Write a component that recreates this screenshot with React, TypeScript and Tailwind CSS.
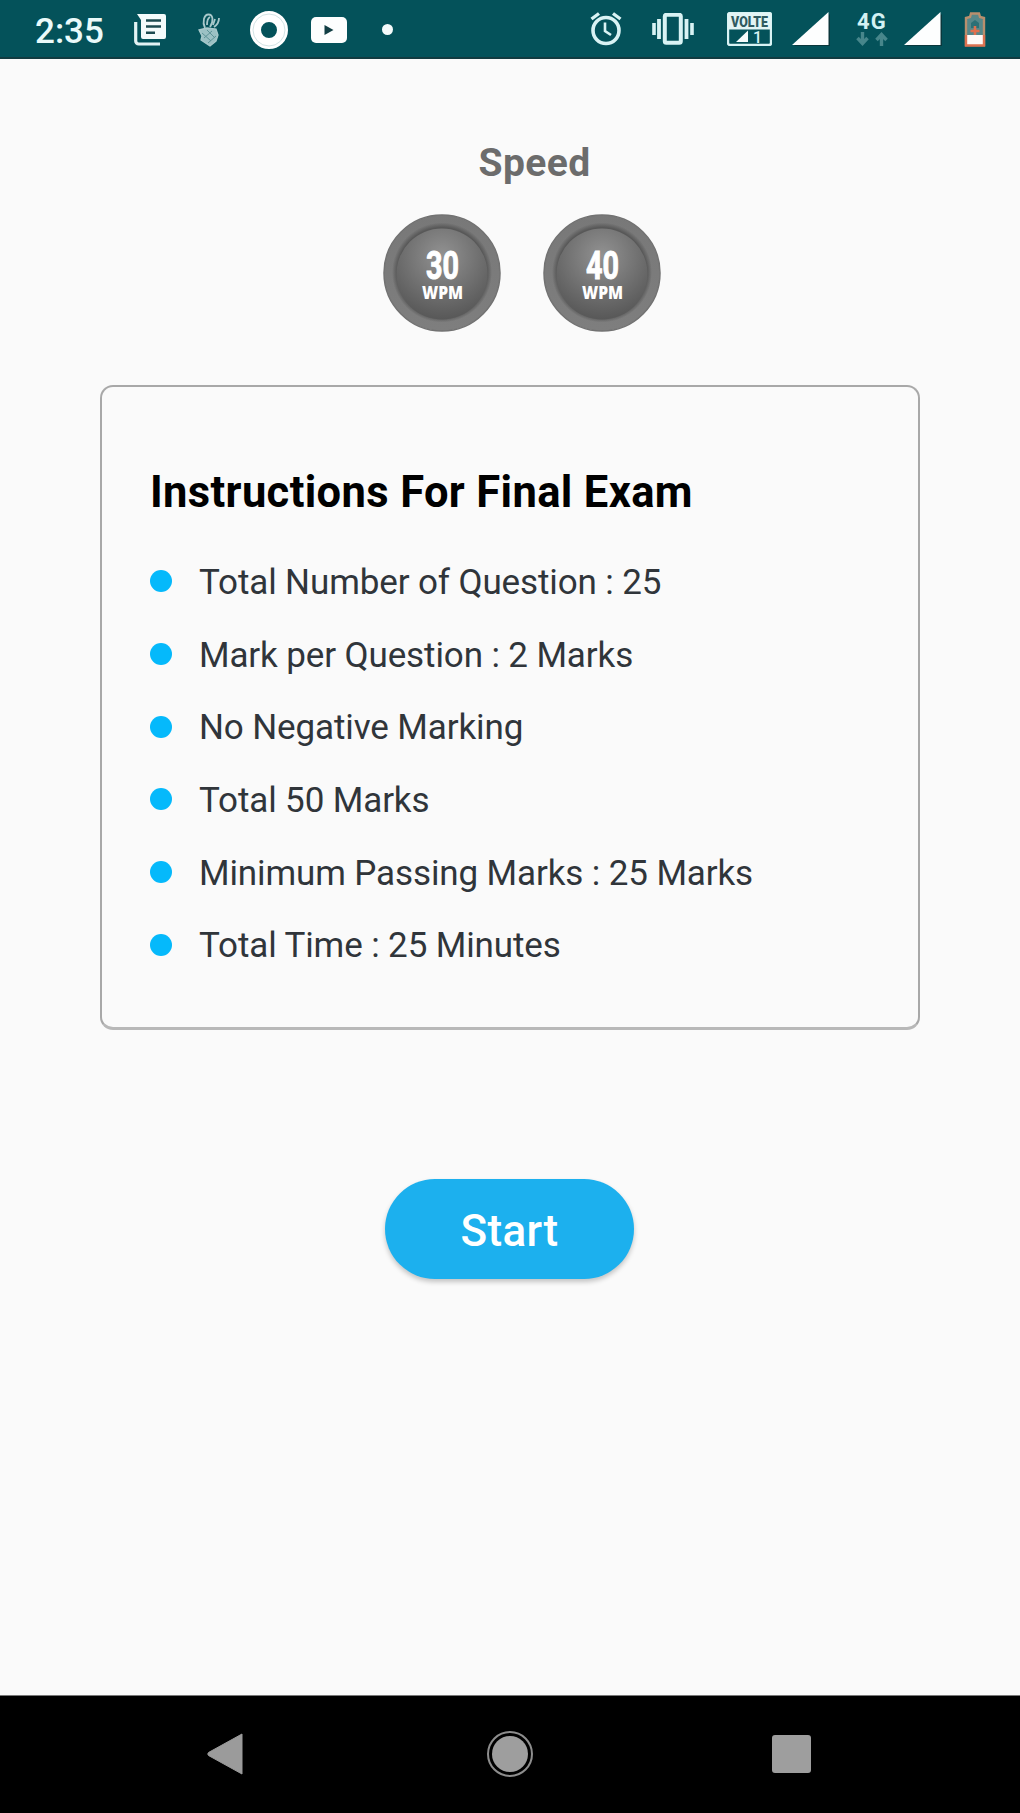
const instructions = [
  "Total Number of Question : 25",
  "Mark per Question : 2 Marks",
  "No Negative Marking",
  "Total 50 Marks",
  "Minimum Passing Marks : 25 Marks",
  "Total Time : 25 Minutes",
];

function NewsIcon() {
  return (
    <svg viewBox="0 0 32 32" className="mt-[2px] ml-[30px] h-8 w-8 shrink-0">
      <path d="M3 0h27a2 2 0 0 1 2 2v21a2 2 0 0 1-2 2H9a2 2 0 0 1-2-2V6z" fill="#f4fbfb" />
      <path d="M12 6.500h15M12 12.500h15M12 18.800h9" stroke="#1c4b50" strokeWidth="2.400" />
      <path d="M1.700 8v19a3 3 0 0 0 3 3H26" fill="none" stroke="#e3f3f4" strokeWidth="3.200" />
    </svg>
  );
}

function MascotIcon() {
  return (
    <svg viewBox="0 0 22 34" className="mt-[2px] ml-[32px] h-[34px] w-[22px] shrink-0" fill="none" stroke="#a9c9cb">
      <path d="M7 15C4 9 6 1.500 10.500 1.500S16 8 12 14M9 12c0-4 1-7 3-8" strokeWidth="1.800" />
      <path d="M21 5c0 4-2 7-5 9M17 6l-2 6" strokeWidth="1.800" />
      <path d="M1 17l8-2 9 1 2 6-2 6-6 5-9-6 1-4z" fill="#9cc1c4" strokeWidth="1.300" />
      <path d="M4 20l9 8M9 17l8 8M6 25l8-7M10 30l8-7" stroke="#5e9397" strokeWidth="1" />
    </svg>
  );
}

function AlarmIcon() {
  return (
    <svg viewBox="0 0 32 34" className="h-[34px] w-8 shrink-0" fill="none" stroke="#d9f3f4">
      <circle cx="16" cy="18.500" r="13" strokeWidth="3.600" />
      <path d="M1.500 7L9 1.500M30.500 7L23 1.500" strokeWidth="3.400" />
      <path d="M15 10.500v8.500l6 4" strokeWidth="2.600" />
    </svg>
  );
}

function VibrateIcon() {
  return (
    <svg viewBox="0 0 42 32" className="ml-[30px] h-8 w-[42px] shrink-0" fill="none" stroke="#d9f3f4">
      <rect x="12.800" y="1.800" width="16" height="28" rx="1.500" strokeWidth="4" />
      <path d="M7 6v20M34.500 6v20" strokeWidth="3.800" />
      <path d="M2 10v12M40 10v12" strokeWidth="3.600" />
    </svg>
  );
}

function VolteIcon() {
  return (
    <svg viewBox="0 0 45 34" className="ml-[33px] h-[34px] w-[45px] shrink-0">
      <rect x="1" y="1" width="43" height="32" rx="2" fill="#04525a" stroke="#d9f3f4" strokeWidth="2.400" />
      <path d="M1 1h43v16.500H1z" fill="#e2f4f5" />
      <text
        x="4"
        y="14.500"
        textLength="37"
        lengthAdjust="spacingAndGlyphs"
        fill="#2f5a60"
        fontFamily="Roboto, sans-serif"
        fontWeight="900"
        fontSize="14"
      >
        VOLTE
      </text>
      <path d="M21 18.500V30H9z" fill="#f4fbfb" />
      <text x="26" y="30.500" fill="#d9f3f4" fontFamily="Roboto, sans-serif" fontWeight="500" fontSize="16">
        1
      </text>
    </svg>
  );
}

function SignalIcon() {
  return (
    <svg viewBox="0 0 38 34" className="h-[34px] w-[38px] shrink-0">
      <path d="M38 2v32H2z" fill="#0a373c" />
      <path d="M36.500 0v33H0z" fill="#fdfefe" />
    </svg>
  );
}

function NetworkType() {
  return (
    <div className="ml-[26px] flex w-8 shrink-0 flex-col items-center">
      <span className="text-[22px] leading-[18px] font-bold tracking-[1.200px] text-[#d3f1f3]">4G</span>
      <svg viewBox="0 0 32 14" className="mt-px h-[14px] w-8" fill="none" stroke="#47868b" strokeWidth="3.400">
        <path d="M6.500 0v11M1.500 6l5 5.500 5-5.500M25.500 14V3M20.500 8l5-5.500 5 5.500" />
      </svg>
    </div>
  );
}

function BatteryIcon() {
  return (
    <svg viewBox="0 0 22 35" className="ml-[22px] h-[35px] w-[22px] shrink-0">
      <path d="M2 6l4-1 1-3.500h8L16 5l4 1v27H2z" fill="#57888a" stroke="#b98f6d" strokeWidth="2.400" />
      <path d="M7 11l4-3 4 3v5H7z" fill="#2c7076" />
      <path d="M2 23v10.500h18V23" fill="#fffaf7" stroke="#dd7250" strokeWidth="2.400" />
      <path d="M11 14v9M6.500 19h9" stroke="#e0704d" strokeWidth="2.600" />
    </svg>
  );
}

function StatusBar() {
  return (
    <header className="flex h-[59px] items-center border-b-2 border-[#123b40] bg-[#04525a]">
      <span className="ml-[35px] w-[69px] pt-[5px] text-[35px] leading-none font-medium whitespace-nowrap text-[#eafafa]">
        2:35
      </span>
      <NewsIcon />
      <MascotIcon />
      <svg viewBox="0 0 38 38" className="mt-[2px] ml-[30px] h-[38px] w-[38px] shrink-0">
        <circle cx="19" cy="19" r="13.500" fill="none" stroke="#fff" strokeWidth="11" />
        <circle cx="19" cy="19" r="16" fill="none" stroke="#d2e3e4" strokeWidth="1" />
      </svg>
      <svg viewBox="0 0 36 26" className="mt-[2px] ml-[23px] h-[26px] w-9 shrink-0">
        <rect width="36" height="26" rx="5" fill="#fdfefe" />
        <path d="M13.500 8l9 5-9 5z" fill="#123f44" />
      </svg>
      <span className="mt-[2px] ml-[35px] h-[11px] w-[11px] rounded-full bg-[#f4fbfb]" />

      <div className="mt-px ml-auto flex items-center pr-[34px]">
        <AlarmIcon />
        <VibrateIcon />
        <VolteIcon />
        <span className="ml-5 flex">
          <SignalIcon />
        </span>
        <NetworkType />
        <span className="ml-4 flex">
          <SignalIcon />
        </span>
        <BatteryIcon />
      </div>
    </header>
  );
}

function SpeedButton({ value }: { value: string }) {
  return (
    <button className="h-[118px] w-[118px] rounded-full">
      <svg viewBox="0 0 118 118" className="h-full w-full">
        <defs>
          <radialGradient id={`face-${value}`} cx="50%" cy="30%" r="72%">
            <stop offset="0" stopColor="#929292" />
            <stop offset="0.500" stopColor="#747474" />
            <stop offset="1" stopColor="#565656" />
          </radialGradient>
          <linearGradient id={`rim-${value}`} x1="0" y1="0" x2="0" y2="1">
            <stop offset="0" stopColor="#787878" />
            <stop offset="1" stopColor="#7e7e7e" />
          </linearGradient>
          <radialGradient id={`edge-${value}`}>
            <stop offset="0.900" stopColor="#585858" />
            <stop offset="1" stopColor="#585858" stopOpacity="0" />
          </radialGradient>
        </defs>
        <circle cx="59" cy="59" r="58" fill={`url(#rim-${value})`} stroke="#727272" strokeWidth="1.500" />
        <circle cx="59" cy="58.500" r="50" fill={`url(#edge-${value})`} />
        <circle cx="59" cy="60" r="45.500" fill={`url(#face-${value})`} />
        <g fill="#fff" fontFamily="Roboto, sans-serif">
          <text
            x="43"
            y="65"
            textLength="33"
            lengthAdjust="spacingAndGlyphs"
            fontWeight="700"
            fontSize="39"
            stroke="#fff"
            strokeWidth="1"
          >
            {value}
          </text>
          <text
            x="39"
            y="85"
            textLength="41"
            lengthAdjust="spacingAndGlyphs"
            fontFamily="Open Sans, sans-serif"
            fontWeight="800"
            fontSize="17"
          >
            WPM
          </text>
        </g>
      </svg>
    </button>
  );
}

function NavigationBar() {
  return (
    <nav className="flex h-[118px] items-center border-t border-[#777] bg-black pb-[2px]">
      <svg viewBox="0 0 37 42" className="ml-[207px] h-[42px] w-[37px]">
        <path d="M35 1v40L1.500 22.500q-1.500-1.500 0-3z" fill="#9b9b9b" stroke="#9b9b9b" />
      </svg>
      <svg viewBox="0 0 48 48" className="ml-[242px] h-12 w-12">
        <circle cx="24" cy="24" r="22" fill="none" stroke="#8d8d8d" strokeWidth="2" />
        <circle cx="24" cy="24" r="18" fill="#9e9e9e" />
      </svg>
      <span className="ml-[238px] h-[38px] w-[39px] rounded-[3px] bg-[#9e9e9e]" />
    </nav>
  );
}

export default function App() {
  return (
    <div className="flex h-[1813px] w-[1020px] flex-col overflow-hidden bg-[#fafafa] font-[Roboto,sans-serif]">
      <StatusBar />

      <main className="flex flex-1 flex-col items-center">
        {/* Speed selector */}
        <h2 className="mt-[82px] ml-[49px] text-[39px] leading-[44px] font-bold tracking-[0.400px] text-[#6c6c6c]">
          Speed
        </h2>
        <div className="mt-[29px] ml-[23px] flex gap-[42px]">
          <SpeedButton value="30" />
          <SpeedButton value="40" />
        </div>

        {/* Instructions card */}
        <section className="mt-[53px] h-[645px] w-[820px] rounded-[13px] border-2 border-b-[3px] border-[#a8a8a8] border-b-[#b8b8b8] pt-[81px] pl-[48px]">
          <h1 className="text-[43.500px] leading-[50px] font-bold tracking-[0.360px] whitespace-nowrap text-black">
            Instructions For Final Exam
          </h1>
          <ul className="mt-[27px]">
            {instructions.map((line) => (
              <li key={line} className="flex h-[72.700px] items-center">
                <span className="h-[22px] w-[22px] rounded-full bg-[#05b9fb]" />
                <span className="ml-[27px] pt-[2px] text-[35px] leading-none tracking-[-0.120px] whitespace-nowrap text-[#30353a]">
                  {line}
                </span>
              </li>
            ))}
          </ul>
        </section>

        <button className="mt-[149px] mr-px h-[100px] w-[249px] rounded-full bg-[#1cb0ee] pt-[3px] text-[44px] font-medium tracking-[0.300px] text-white shadow-[0_3px_5px_rgba(0,0,0,0.22)]">
          Start
        </button>
      </main>

      <NavigationBar />
    </div>
  );
}
